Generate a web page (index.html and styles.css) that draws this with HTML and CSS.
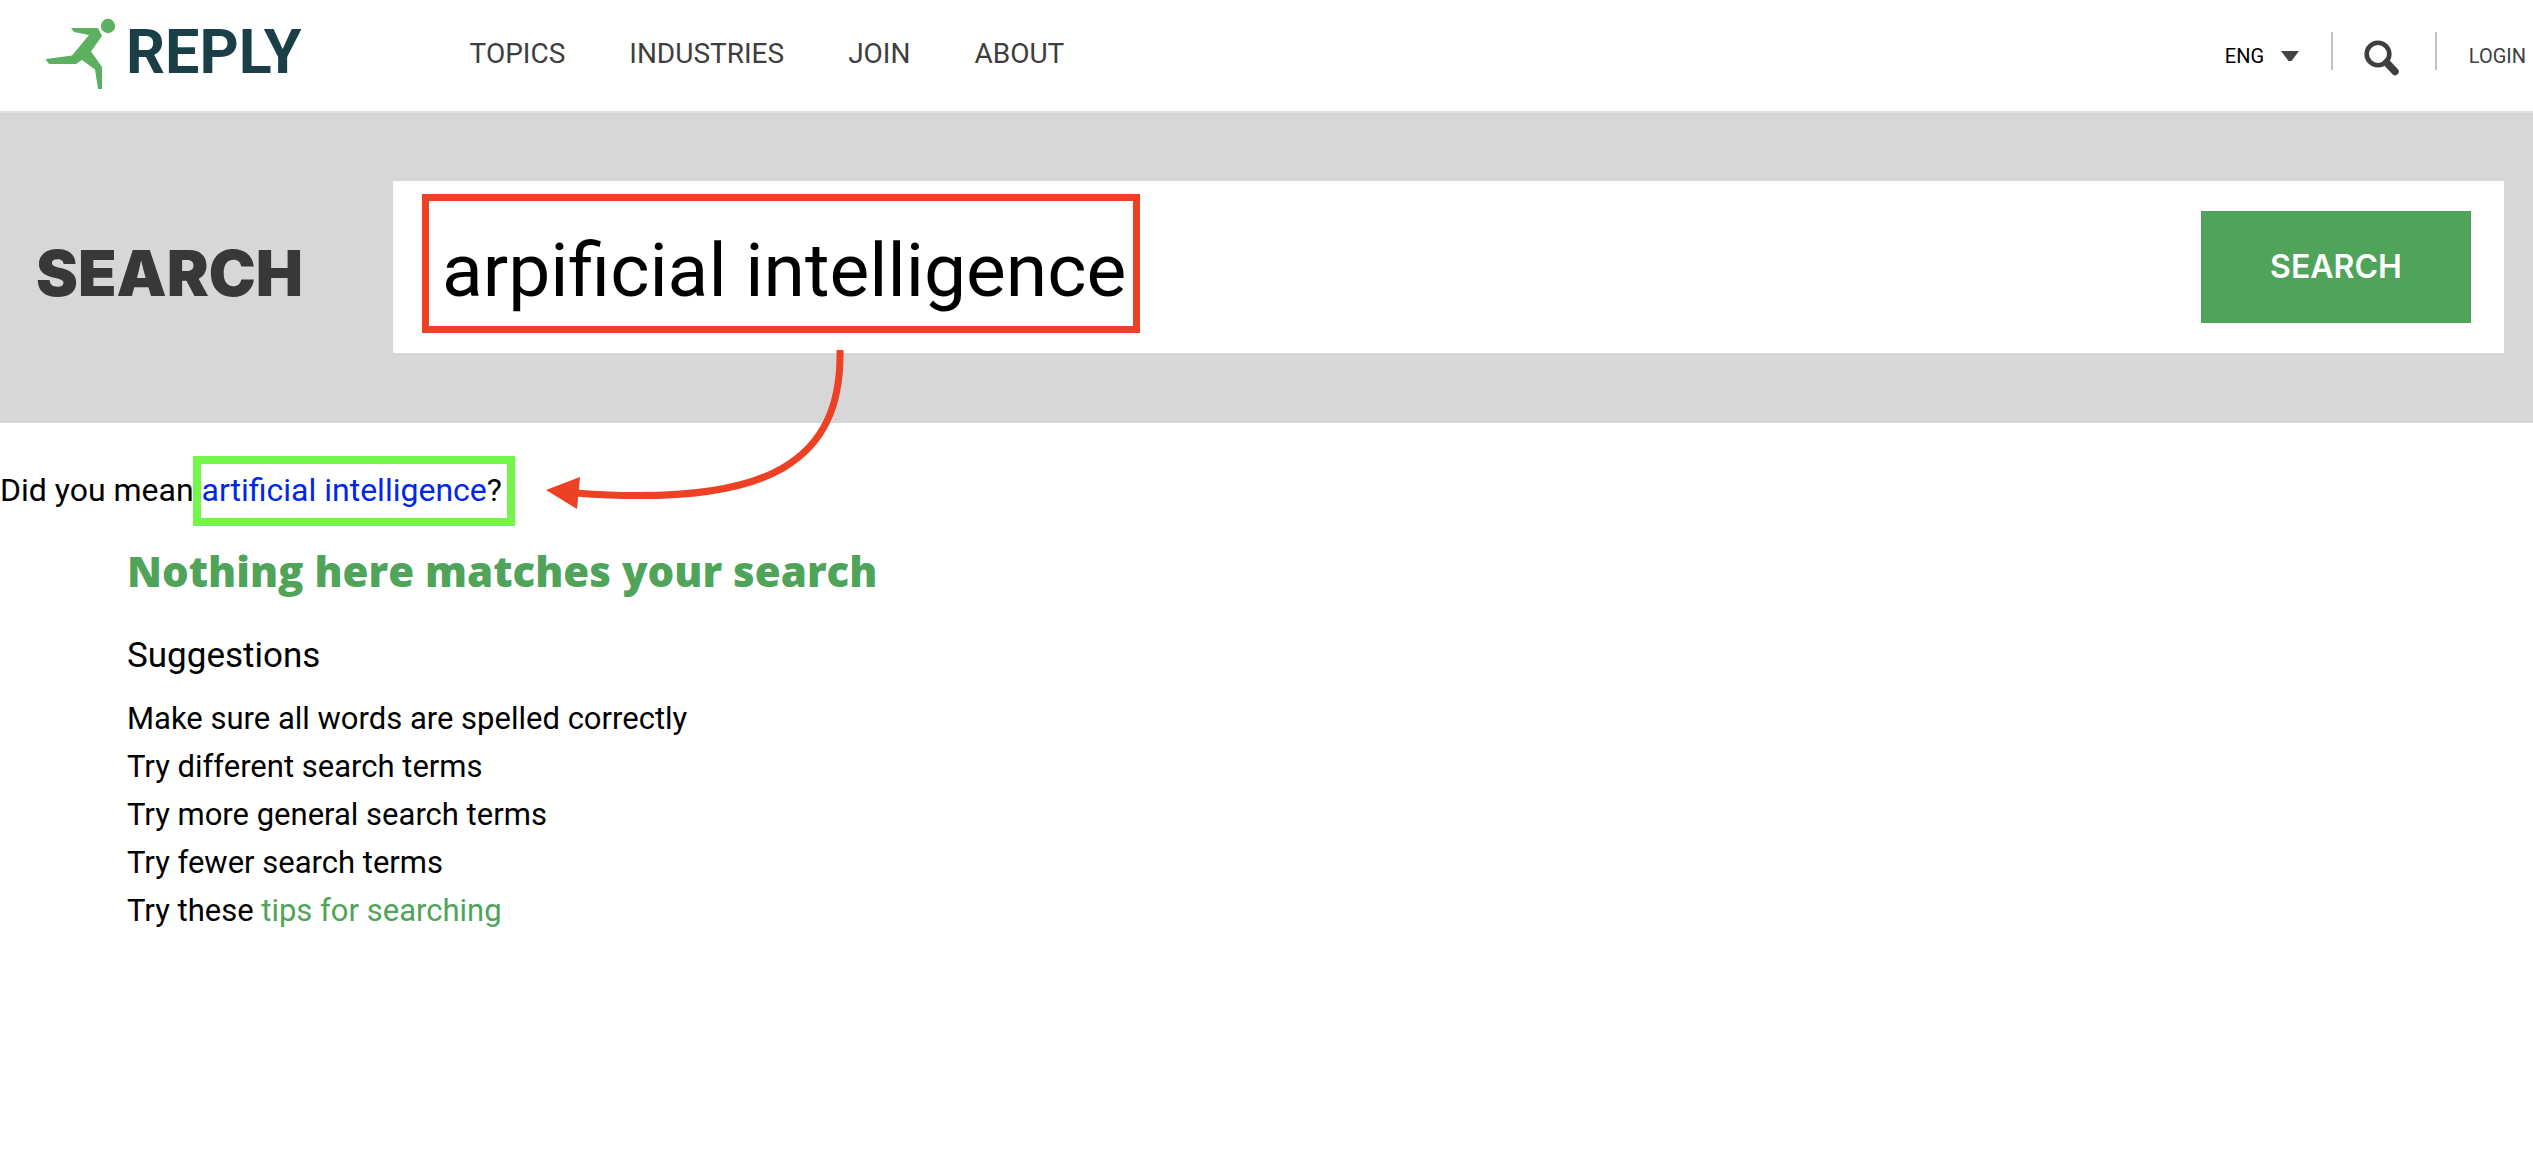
FILE: index.html
```html
<!DOCTYPE html>
<html lang="en">
<head>
<meta charset="utf-8">
<meta name="viewport" content="width=device-width, initial-scale=1">
<title>Search | Reply</title>
<link rel="stylesheet" href="styles.css">
</head>
<body>
<header class="site-header">
  <a class="logo" href="#">
    <svg class="logo-mark" width="70" height="70" viewBox="0 0 70 70" fill="#5cb060" aria-hidden="true">
      <circle cx="62" cy="7" r="7.2"/>
      <path d="M25 9H52L56 17 45 32.500 56 48V70H52L49 50.500 36 41 30 45H3L0 41V40L26 36.500 43 16 28 13Z"/>
    </svg>
    <span class="logo-name">REPLY</span>
  </a>
  <nav class="main-nav" aria-label="Main">
    <a href="#">TOPICS</a>
    <a href="#">INDUSTRIES</a>
    <a href="#">JOIN</a>
    <a href="#">ABOUT</a>
  </nav>
  <div class="tools">
    <div class="language">
      <select class="language-select" aria-label="Language">
        <option>ENG</option>
        <option>ITA</option>
        <option>DEU</option>
      </select>
      <svg class="language-arrow" width="18" height="11" viewBox="0 0 18 11" aria-hidden="true"><path d="M0 0H18L10.500 10H7.500Z" fill="#444"/></svg>
    </div>
    <div class="tool-search">
      <button class="icon-button" type="button" aria-label="Search">
        <svg width="36" height="36" viewBox="0 0 36 36" fill="none" stroke="#3e3e3e" aria-hidden="true"><circle cx="14" cy="14" r="11.300" stroke-width="4.600"/><path d="M23 23L31 31.500" stroke-width="7.500" stroke-linecap="round"/><path d="M20 20L24 24" stroke-width="4"/></svg>
      </button>
    </div>
    <a class="login" href="#">LOGIN</a>
  </div>
</header>
<main>
  <section class="search-band">
    <h1 class="search-title">SEARCH</h1>
    <form class="search-form">
      <input class="search-input" type="text" aria-label="Search terms" value="arpificial intelligence">
      <button class="search-button" type="submit">SEARCH</button>
      <span class="mark-typed"></span>
      <svg class="mark-arrow" width="270" height="165" viewBox="0 0 270 165" aria-hidden="true">
        <path d="M294 0C296 110 226 158 30 143" fill="none" stroke="#ec4125" stroke-width="7"/>
        <path d="M0 140L34 127L31 159Z" fill="#ec4125"/>
      </svg>
    </form>
  </section>
  <p class="did-you-mean">Did you mean <span class="suggestion"><a href="#">artificial intelligence</a>?</span></p>
  <section class="results">
    <h2 class="results-title">Nothing here matches your search</h2>
    <h3 class="tips-title">Suggestions</h3>
    <ul class="tips">
      <li>Make sure all words are spelled correctly</li>
      <li>Try different search terms</li>
      <li>Try more general search terms</li>
      <li>Try fewer search terms</li>
      <li>Try these <a href="#">tips for searching</a></li>
    </ul>
  </section>
</main>
</body>
</html>
```

FILE: styles.css
```css
*,
*::after {
  box-sizing: border-box;
}

body {
  margin: 0;
  background: #fff;
  color: #000;
  font: 32px/48px Roboto, "Liberation Sans", sans-serif;
}

a {
  text-decoration: none;
}

h1, h2, h3, p, ul {
  margin: 0;
}

.site-header {
  display: flex;
  align-items: flex-start;
  height: 113px;
  padding-left: 46px;
  border-bottom: 2px solid #e0e0e0;
}

.logo {
  display: flex;
  gap: 10px;
  padding-top: 19px;
  color: #1a3f47;
}

.logo-mark {
  overflow: visible;
}

.logo-name {
  font-size: 61px;
  font-weight: 700;
  line-height: 66px;
}

.main-nav {
  display: flex;
  gap: 64px;
  padding: 30px 0 0 168px;
  font-size: 28px;
}

.main-nav a {
  color: #3e3e3e;
}

.tools {
  display: flex;
  gap: 32px;
  margin-left: auto;
  padding: 32px 7px 0 0;
  font-size: 20px;
}

.language {
  display: flex;
  align-items: center;
  gap: 15px;
  height: 48px;
}

.language-select {
  appearance: none;
  width: 41px;
  padding: 0;
  border: 0;
  background: none;
  color: #000;
  font: inherit;
}

.tool-search {
  height: 38px;
  padding: 8px 35px 0 31px;
  border: solid #c0c0c0;
  border-width: 0 2px;
}

.icon-button {
  display: block;
  padding: 0;
  border: 0;
  background: none;
}

.icon-button svg {
  display: block;
}

.login {
  color: #3e3e3e;
}

.search-band {
  display: grid;
  grid-template-columns: 357px 1fr;
  align-items: center;
  padding: 68px 29px 70px 36px;
  background: #d7d7d7;
}

.search-title {
  padding-top: 12px;
  color: #383838;
  font: 900 63px/72px Inter, sans-serif;
}

.search-form {
  position: relative;
  display: flex;
  align-items: center;
  height: 172px;
  padding-right: 33px;
  background: #fff;
}

.search-input {
  flex: 1;
  min-width: 0;
  height: 100%;
  padding: 6px 0 0 49px;
  border: 0;
  outline: 0;
  background: none;
  color: #000;
  font: 75px/100px Roboto, sans-serif;
}

.search-button {
  width: 270px;
  height: 112px;
  border: 0;
  background: #4fa45a;
  color: #fff;
  font: 600 32px/40px Inter, sans-serif;
}

.mark-typed {
  position: absolute;
  top: 13px;
  left: 29px;
  width: 718px;
  height: 139px;
  border: 7px solid #ec4125;
  pointer-events: none;
}

.mark-arrow {
  position: absolute;
  top: 169px;
  left: 153px;
  overflow: visible;
  pointer-events: none;
}

.did-you-mean {
  padding: 43px 0 27px;
}

.suggestion {
  position: relative;
}

.suggestion::after {
  content: "";
  position: absolute;
  top: -15px;
  left: -9px;
  width: 322px;
  height: 70px;
  border: 8px solid #73f54b;
  pointer-events: none;
}

.did-you-mean a {
  color: #0026e8;
}

.results {
  padding: 0 127px;
}

.results-title {
  color: #4fa45a;
  font: 800 42px/60px "Open Sans", sans-serif;
}

.tips-title {
  margin: 31px 0 15px;
  font-size: 35px;
  font-weight: 400;
}

.tips {
  padding: 0;
  font-size: 31px;
  list-style: none;
}

.tips a {
  color: #4fa45a;
}
```
